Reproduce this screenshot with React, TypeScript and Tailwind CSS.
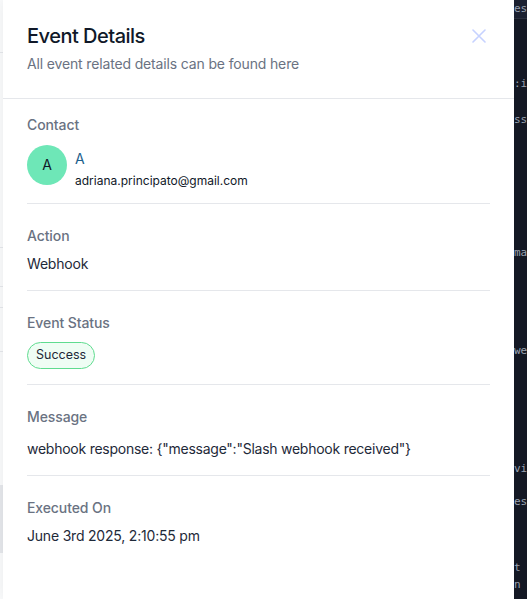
const sans = { fontFamily: 'Inter, "Noto Sans", sans-serif' };

const codeBits = [
  { top: 76, text: ':i' },
  { top: 112, text: 'ss' },
  { top: 245, text: 'ma' },
  { top: 343, text: 'we' },
  { top: 461, text: 'vi' },
  { top: 494, text: 'es' },
  { top: 560, text: 't' },
  { top: 577, text: 'n' },
];

function Section({
  label,
  children,
  last,
  pb = 'pb-4',
}: {
  label: string;
  children: React.ReactNode;
  last?: boolean;
  pb?: string;
}) {
  return (
    <div className={`pt-[22px] ${pb} ${last ? '' : 'border-b border-gray-200'}`}>
      <div className="text-sm leading-5 font-medium tracking-[-0.1px] text-gray-500">{label}</div>
      {children}
    </div>
  );
}

export default function App() {
  return (
    <div className="flex h-[599px] w-[527px] overflow-hidden bg-white" style={sans}>
      {/* background page peeking out on the left */}
      <div className="flex w-[3px] shrink-0 flex-col bg-gray-50">
        <div className="h-[53px] border-b border-gray-200" />
        <div className="h-[195px] border-b border-gray-200" />
        <div className="h-[39px] border-b border-gray-200" />
        <div className="h-[21px] border-b border-gray-200" />
        <div className="h-[44px] border-b border-gray-200" />
        <div className="h-[133px]" />
        <div className="h-[68px] bg-gray-200" />
      </div>

      {/* drawer */}
      <div className="flex w-[511px] shrink-0 flex-col bg-white shadow-[0_0_12px_rgba(0,0,0,0.06)]">
        <div className="flex items-start justify-between border-b border-gray-200 px-6 pt-[22px] pb-6">
          <div>
            <h2 className="text-xl leading-7 font-medium tracking-[-0.5px] text-gray-900">Event Details</h2>
            <p className="mt-1 text-sm leading-5 tracking-[-0.15px] text-gray-500">
              All event related details can be found here
            </p>
          </div>
          <button className="mt-[7px] mr-[4px] text-indigo-200">
            <svg width="14" height="14" viewBox="0 0 14 14" fill="none" stroke="currentColor" strokeWidth="1.6" strokeLinecap="round">
              <path d="M1 1l12 12M13 1L1 13" />
            </svg>
          </button>
        </div>

        <div className="px-6">
          <div className="pt-[16px] pb-[11px] border-b border-gray-200">
            <div className="text-sm leading-5 font-medium tracking-[-0.1px] text-gray-500">Contact</div>
            <div className="mt-[10px] flex items-start gap-2">
              <div className="flex h-10 w-10 shrink-0 items-center justify-center rounded-full bg-[#6ee7b7] text-sm text-gray-900">
                A
              </div>
              <div className="mt-[3px] flex flex-col">
                <span className="text-sm leading-[22px] text-[#1d5f8c]">A</span>
                <span className="text-xs leading-[22px] text-gray-900">adriana.principato@gmail.com</span>
              </div>
            </div>
          </div>

          <Section label="Action">
            <div className="mt-2 text-sm leading-5 tracking-[-0.2px] text-gray-800">Webhook</div>
          </Section>

          <Section label="Event Status" pb="pb-[15px]">
            <span className="mt-[9px] inline-flex h-[27px] items-center rounded-full border border-[#5fdc8f] bg-[#effdf4] px-2 text-[12.5px] text-gray-800">
              Success
            </span>
          </Section>

          <Section label="Message">
            <div className="mt-3 text-sm leading-5 tracking-[-0.25px] text-gray-800">
              webhook response: {'{"message":"Slash webhook received"}'}
            </div>
          </Section>

          <Section label="Executed On" last>
            <div className="mt-2 text-sm leading-5 tracking-[-0.2px] text-gray-800">June 3rd 2025, 2:10:55 pm</div>
          </Section>
        </div>
      </div>

      {/* dark code panel on the right */}
      <div
        className="relative flex-1 overflow-hidden bg-[#141824] text-[11px] text-gray-400"
        style={{ fontFamily: '"DejaVu Sans Mono", monospace' }}
      >
        <div className="h-[19px] whitespace-nowrap border-b border-[#2a2f3d] bg-[#1b2030] pt-[1px] leading-4">es</div>
        {codeBits.map((b) => (
          <div key={b.top} className="absolute left-0 whitespace-nowrap leading-4" style={{ top: b.top }}>
            {b.text}
          </div>
        ))}
      </div>
    </div>
  );
}
